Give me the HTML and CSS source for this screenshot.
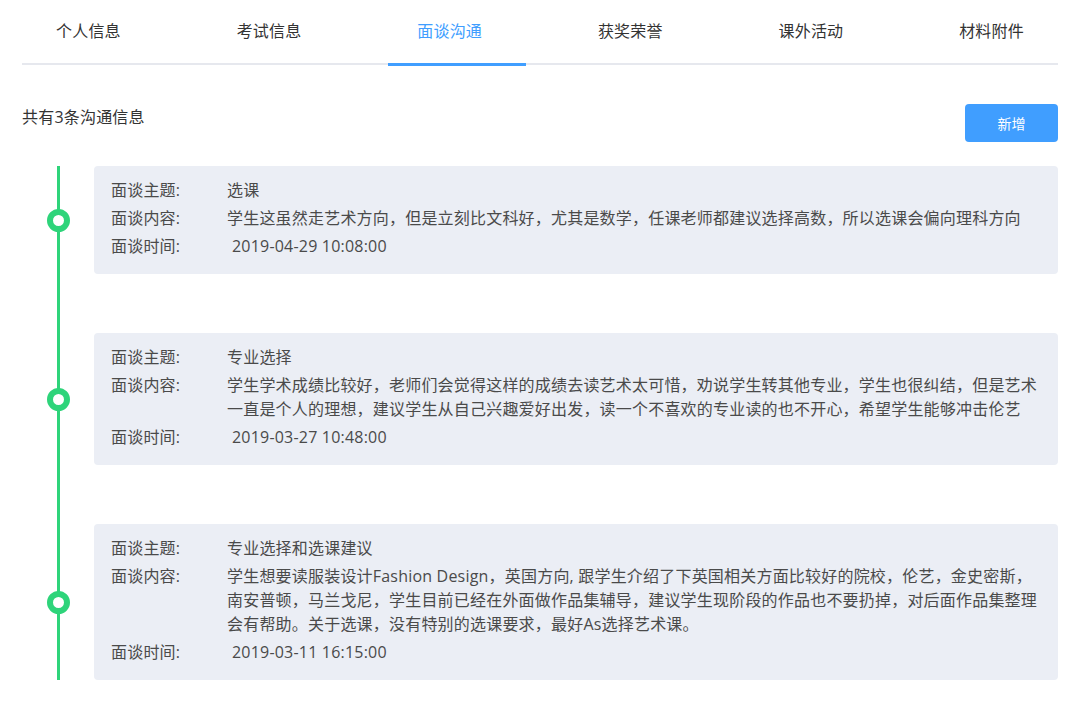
FILE: index.html
```html
<!DOCTYPE html>
<html lang="zh-CN">
<head>
    <meta charset="UTF-8">
    <meta name="viewport" content="width=device-width, initial-scale=1.0">
    <title>面谈沟通</title>
    <link rel="stylesheet" href="styles.css">
</head>
<body>
    <div class="page">
        <div class="tabs">
            <div class="tab">个人信息</div>
            <div class="tab">考试信息</div>
            <div class="tab active">面谈沟通</div>
            <div class="tab">获奖荣誉</div>
            <div class="tab">课外活动</div>
            <div class="tab">材料附件</div>
        </div>

        <div class="toolbar">
            <span class="total">共有3条沟通信息</span>
            <button class="btn-add">新增</button>
        </div>

        <div class="timeline">
            <div class="timeline-item">
                <span class="dot"></span>
                <div class="card">
                    <div class="row"><span class="label">面谈主题:</span><span class="value">选课</span></div>
                    <div class="row"><span class="label">面谈内容:</span><span class="value">学生这虽然走艺术方向，但是立刻比文科好，尤其是数学，任课老师都建议选择高数，所以选课会偏向理科方向</span></div>
                    <div class="row"><span class="label">面谈时间:</span><span class="value time">2019-04-29 10:08:00</span></div>
                </div>
            </div>

            <div class="timeline-item">
                <span class="dot"></span>
                <div class="card">
                    <div class="row"><span class="label">面谈主题:</span><span class="value">专业选择</span></div>
                    <div class="row"><span class="label">面谈内容:</span><span class="value">学生学术成绩比较好，老师们会觉得这样的成绩去读艺术太可惜，劝说学生转其他专业，学生也很纠结，但是艺术一直是个人的理想，建议学生从自己兴趣爱好出发，读一个不喜欢的专业读的也不开心，希望学生能够冲击伦艺</span></div>
                    <div class="row"><span class="label">面谈时间:</span><span class="value time">2019-03-27 10:48:00</span></div>
                </div>
            </div>

            <div class="timeline-item">
                <span class="dot"></span>
                <div class="card">
                    <div class="row"><span class="label">面谈主题:</span><span class="value">专业选择和选课建议</span></div>
                    <div class="row"><span class="label">面谈内容:</span><span class="value">学生想要读服装设计Fashion Design，英国方向, 跟学生介绍了下英国相关方面比较好的院校，伦艺，金史密斯，南安普顿，马兰戈尼，学生目前已经在外面做作品集辅导，建议学生现阶段的作品也不要扔掉，对后面作品集整理会有帮助。关于选课，没有特别的选课要求，最好As选择艺术课。</span></div>
                    <div class="row"><span class="label">面谈时间:</span><span class="value time">2019-03-11 16:15:00</span></div>
                </div>
            </div>
        </div>
    </div>
</body>
</html>
```

FILE: styles.css
```css
body {
    margin: 0;
    background-color: #fff;
    font-family: "Open Sans", "Noto Sans CJK SC", sans-serif;
    color: #333;
}

.page {
    padding: 0 8px 0 22px;
}

.tabs {
    display: flex;
    justify-content: space-between;
    border-bottom: 2px solid #e6e8ee;
}

.tab {
    position: relative;
    padding: 0 34px;
    height: 63px;
    line-height: 63px;
    font-size: 16px;
    letter-spacing: 0.2px;
    color: #333;
    cursor: pointer;
}

.tab.active {
    color: #409eff;
}

.tab.active::after {
    content: "";
    position: absolute;
    left: 5px;
    bottom: -3px;
    width: 138px;
    height: 3px;
    background-color: #409eff;
}

.toolbar {
    display: flex;
    justify-content: space-between;
    align-items: flex-start;
    margin-top: 39px;
}

.total {
    font-size: 16px;
    line-height: 26px;
    letter-spacing: 0.2px;
    color: #333;
}

.btn-add {
    width: 93px;
    height: 38px;
    border: none;
    border-radius: 4px;
    background-color: #409eff;
    color: #fff;
    font-family: "Noto Sans CJK SC", sans-serif;
    font-size: 14px;
    cursor: pointer;
}

.timeline {
    position: relative;
    margin-top: 24px;
    padding-left: 72px;
}

/* vertical line */
.timeline::before {
    content: "";
    position: absolute;
    left: 35px;
    top: 0;
    bottom: 0;
    width: 3px;
    background-color: #2ed47a;
}

.timeline-item {
    position: relative;
    margin-bottom: 59px;
}

.timeline-item:last-child {
    margin-bottom: 0;
}

.dot {
    position: absolute;
    left: -47px;
    top: 50%;
    margin-top: -11px;
    width: 23px;
    height: 23px;
    box-sizing: border-box;
    border: 6px solid #2ed47a;
    border-radius: 50%;
    background-color: #fff;
}

.card {
    background-color: #ebeef5;
    border-radius: 4px;
    padding: 12px 20px 12px 17px;
}

.row {
    display: flex;
    font-size: 16px;
    line-height: 24px;
    letter-spacing: 0.2px;
    margin-bottom: 4px;
    color: #4a4a4a;
}

.label {
    width: 116px;
    flex-shrink: 0;
}

.value {
    flex: 1;
}

.time {
    padding-left: 5px;
}
```
